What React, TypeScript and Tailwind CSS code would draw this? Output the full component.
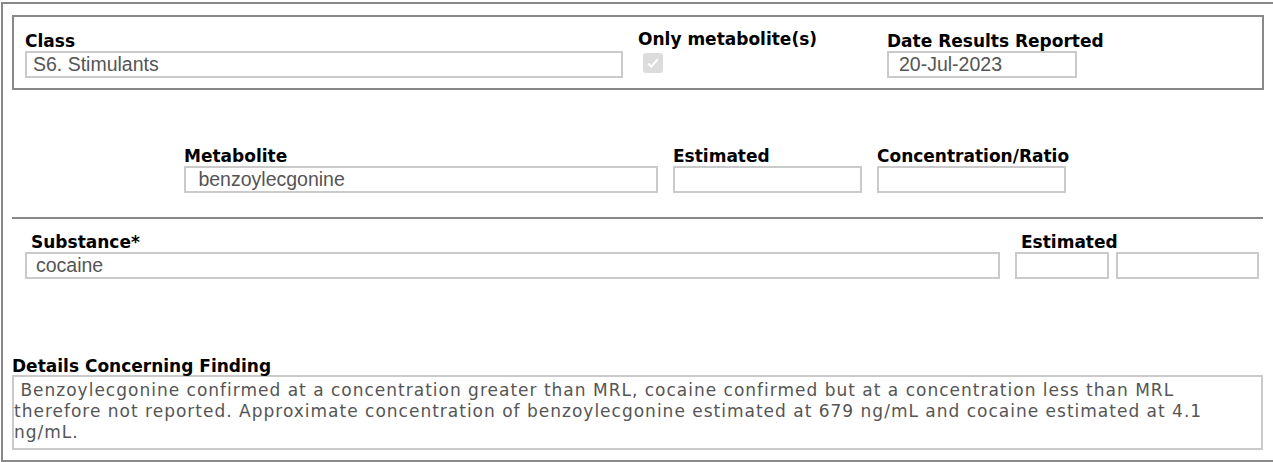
import React from 'react';

const labelCls = "block font-bold text-black text-[17px] leading-[17px] font-['DejaVu_Sans',sans-serif] whitespace-nowrap";
const inputCls = "block h-[27px] border-2 border-[#cacaca] bg-white text-[19.5px] text-[#555] font-['Liberation_Sans',Arial,sans-serif] outline-none";

function Field({ label, value = '', width, pad = 'pl-[6px]', labelIndent = '' }: { label?: string; value?: string; width: string; pad?: string; labelIndent?: string }) {
  return (
    <div className={`flex flex-col ${width}`}>
      <span className={`${labelCls} ${labelIndent} h-[17px]`}>{label}</span>
      <input readOnly defaultValue={value} className={`${inputCls} ${width} ${pad} mt-[1px]`} />
    </div>
  );
}

export default function App() {
  return (
    <div className="w-[1273px] h-[462px] overflow-hidden bg-white pt-[2px] pl-[1px]">
      <div className="h-[460px] w-[1300px] border-t-2 border-l-2 border-b-2 border-[#888] pl-[9px] pt-[11px]">
        {/* Top box */}
        <div className="w-[1252px] h-[75px] border-2 border-[#888] flex pt-[16px] pl-[11px]">
          <Field label="Class" value="S6. Stimulants" width="w-[598px]" />
          <div className="ml-[15px] w-[249px] flex flex-col -mt-[2px]">
            <span className={labelCls}>Only metabolite(s)</span>
            <div className="mt-[5px] ml-[5px] w-[20px] h-[20px] rounded-[3px] bg-[#dcdcdc] flex items-center justify-center">
              <svg viewBox="0 0 20 20" className="w-[16px] h-[16px]">
                <path d="M4 10.5 L8 14.5 L16 5" fill="none" stroke="#fff" strokeWidth="2.6" />
              </svg>
            </div>
          </div>
          <Field label="Date Results Reported" value="20-Jul-2023" width="w-[190px]" pad="pl-[10px]" />
        </div>

        {/* Metabolite row */}
        <div className="flex gap-[15px] ml-[172px] mt-[58px]">
          <Field label="Metabolite" value=" benzoylecgonine" width="w-[474px]" pad="pl-[7px]" />
          <Field label="Estimated" width="w-[189px]" />
          <Field label="Concentration/Ratio" width="w-[189px]" />
        </div>

        <div className="w-[1251px] h-[2px] bg-[#888] mt-[24px]" />

        {/* Substance row */}
        <div className="flex ml-[13px] mt-[15px]">
          <Field label="Substance*" value="cocaine" width="w-[975px]" pad="pl-[9px]" labelIndent="pl-[6px]" />
          <div className="ml-[15px]">
            <Field label="Estimated" width="w-[94px]" labelIndent="pl-[6px]" />
          </div>
          <div className="ml-[7px]">
            <Field width="w-[143px]" />
          </div>
        </div>

        {/* Details */}
        <div className="mt-[79px]">
          <span className={labelCls}>Details Concerning Finding</span>
          <div className="w-[1251px] h-[75px] border-2 border-[#cacaca] pt-[3px] text-[17px] tracking-[1px] leading-[21px] text-[#555] font-['DejaVu_Sans',Verdana,sans-serif] whitespace-pre">
            <div>{' Benzoylecgonine confirmed at a concentration greater than MRL, cocaine confirmed but at a concentration less than MRL'}</div>
            <div>therefore not reported. Approximate concentration of benzoylecgonine estimated at 679 ng/mL and cocaine estimated at 4.1</div>
            <div>ng/mL.</div>
          </div>
        </div>
      </div>
    </div>
  );
}
